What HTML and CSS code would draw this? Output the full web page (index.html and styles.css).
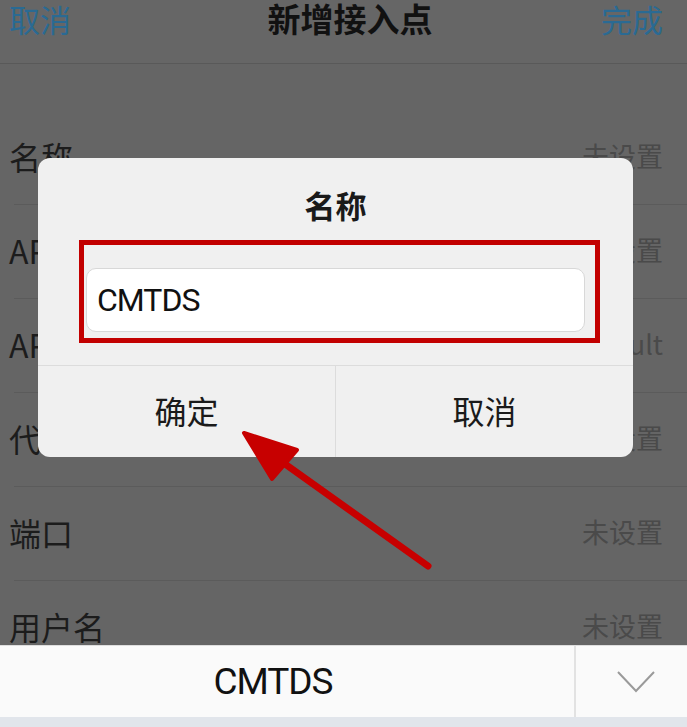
FILE: index.html
```html
<!DOCTYPE html>
<html lang="zh-CN">
<head>
    <meta charset="UTF-8">
    <meta name="viewport" content="width=device-width, initial-scale=1.0">
    <title>新增接入点</title>
    <link rel="stylesheet" href="styles.css">
</head>
<body>
    <div class="screen">
        <div class="topbar">
            <span class="top-link">取消</span>
            <span class="top-title">新增接入点</span>
            <span class="top-link">完成</span>
        </div>

        <div class="list">
            <div class="row"><span class="label">名称</span><span class="value">未设置</span></div>
            <div class="row"><span class="label">APN</span><span class="value">未设置</span></div>
            <div class="row"><span class="label">APN类型</span><span class="value">default</span></div>
            <div class="row"><span class="label">代理</span><span class="value">未设置</span></div>
            <div class="row"><span class="label">端口</span><span class="value">未设置</span></div>
            <div class="row"><span class="label">用户名</span><span class="value">未设置</span></div>
        </div>

        <!-- dialog over the dimmed list -->
        <div class="dialog">
            <div class="dialog-title">名称</div>
            <div class="mark-box">
                <div class="name-input">CMTDS</div>
            </div>
            <div class="dialog-buttons">
                <div class="dialog-btn">确定</div>
                <div class="dialog-btn">取消</div>
            </div>
        </div>

        <svg class="arrow" width="687" height="727" viewBox="0 0 687 727">
            <line x1="428" y1="566" x2="264" y2="449" stroke="#c70000" stroke-width="7" stroke-linecap="round"/>
            <polygon points="244,433 297,450 272,479" fill="#c70000" stroke="#c70000" stroke-width="4" stroke-linejoin="round"/>
        </svg>

        <!-- keyboard suggestion strip, lies over the list -->
        <div class="keyboard">
            <div class="suggest">
                <div class="suggest-word">CMTDS</div>
                <div class="suggest-more">
                    <svg width="40" height="24" viewBox="0 0 40 24">
                        <polyline points="2,2 20,21 38,2" fill="none" stroke="#9a9a9a" stroke-width="2"/>
                    </svg>
                </div>
            </div>
            <div class="keyboard-edge"></div>
        </div>
    </div>
</body>
</html>
```

FILE: styles.css
```css
* {
    margin: 0;
    padding: 0;
    box-sizing: border-box;
}

body {
    background-color: #656565;
    font-family: "Noto Sans CJK SC", "Noto Sans", sans-serif;
    overflow: hidden;
}

.screen {
    position: relative;
    width: 687px;
    height: 727px;
    overflow: hidden;
    background-color: #656565;
}

.topbar {
    height: 64px;
    display: flex;
    justify-content: space-between;
    align-items: center;
    padding: 0 24px 26px 9px;
    border-bottom: 1px solid #595959;
    background-color: #666666;
}

.top-link {
    font-size: 31px;
    color: #2a6a93;
    line-height: 1;
}

.top-title {
    font-size: 33px;
    font-weight: 700;
    color: #111;
    line-height: 1;
    margin-left: 28px;
}

.list {
    margin-top: 47px;
}

.row {
    height: 94px;
    display: flex;
    justify-content: space-between;
    align-items: center;
    margin-left: 14px;
    padding: 0 24px 4px 0;
    border-bottom: 1px solid #5b5b5b;
}

.label {
    font-size: 32px;
    color: #1c1c1c;
    margin-left: -5px;
}

.value {
    font-size: 27px;
    color: #4a4a4a;
}

.dialog {
    position: absolute;
    left: 38px;
    top: 158px;
    width: 595px;
    height: 299px;
    background-color: #f0f0f0;
    border-radius: 12px;
    display: flex;
    flex-direction: column;
    align-items: center;
}

.dialog-title {
    margin-top: 27px;
    height: 40px;
    line-height: 40px;
    font-size: 31px;
    font-weight: 700;
    color: #1a1a1a;
}

.mark-box {
    align-self: flex-start;
    margin-top: 15px;
    margin-left: 41px;
    width: 521px;
    height: 103px;
    border: 5px solid #c20000;
    padding: 23px 10px 6px 2px;
}

.name-input {
    height: 64px;
    background-color: #fff;
    border: 1px solid #d8d8d8;
    border-radius: 10px;
    padding-left: 10px;
    display: flex;
    align-items: center;
    font-family: Roboto, "Noto Sans", sans-serif;
    font-size: 32px;
    letter-spacing: -1px;
    color: #111;
}

.dialog-buttons {
    margin-top: 22px;
    width: 100%;
    flex: 1;
    display: flex;
    border-top: 1px solid #dcdcdc;
}

.dialog-btn {
    flex: 1;
    display: flex;
    justify-content: center;
    align-items: center;
    font-size: 32px;
    color: #1a1a1a;
    padding-bottom: 4px;
}

.dialog-btn + .dialog-btn {
    border-left: 1px solid #dcdcdc;
}

.arrow {
    position: absolute;
    left: 0;
    top: 0;
}

.keyboard {
    position: absolute;
    left: 0;
    right: 0;
    bottom: 0;
}

.suggest {
    height: 72px;
    display: flex;
    background-color: #fafafa;
    border-top: 1px solid #dedede;
}

.suggest-word {
    flex: 1;
    display: flex;
    justify-content: center;
    align-items: center;
    font-family: Roboto, "Noto Sans", sans-serif;
    font-size: 37px;
    letter-spacing: -1px;
    color: #111;
    padding-right: 28px;
}

.suggest-more {
    width: 113px;
    border-left: 2px solid #e2e2e2;
    display: flex;
    justify-content: center;
    align-items: center;
    padding-left: 8px;
}

.keyboard-edge {
    height: 10px;
    background-color: #e1e5eb;
}
```
